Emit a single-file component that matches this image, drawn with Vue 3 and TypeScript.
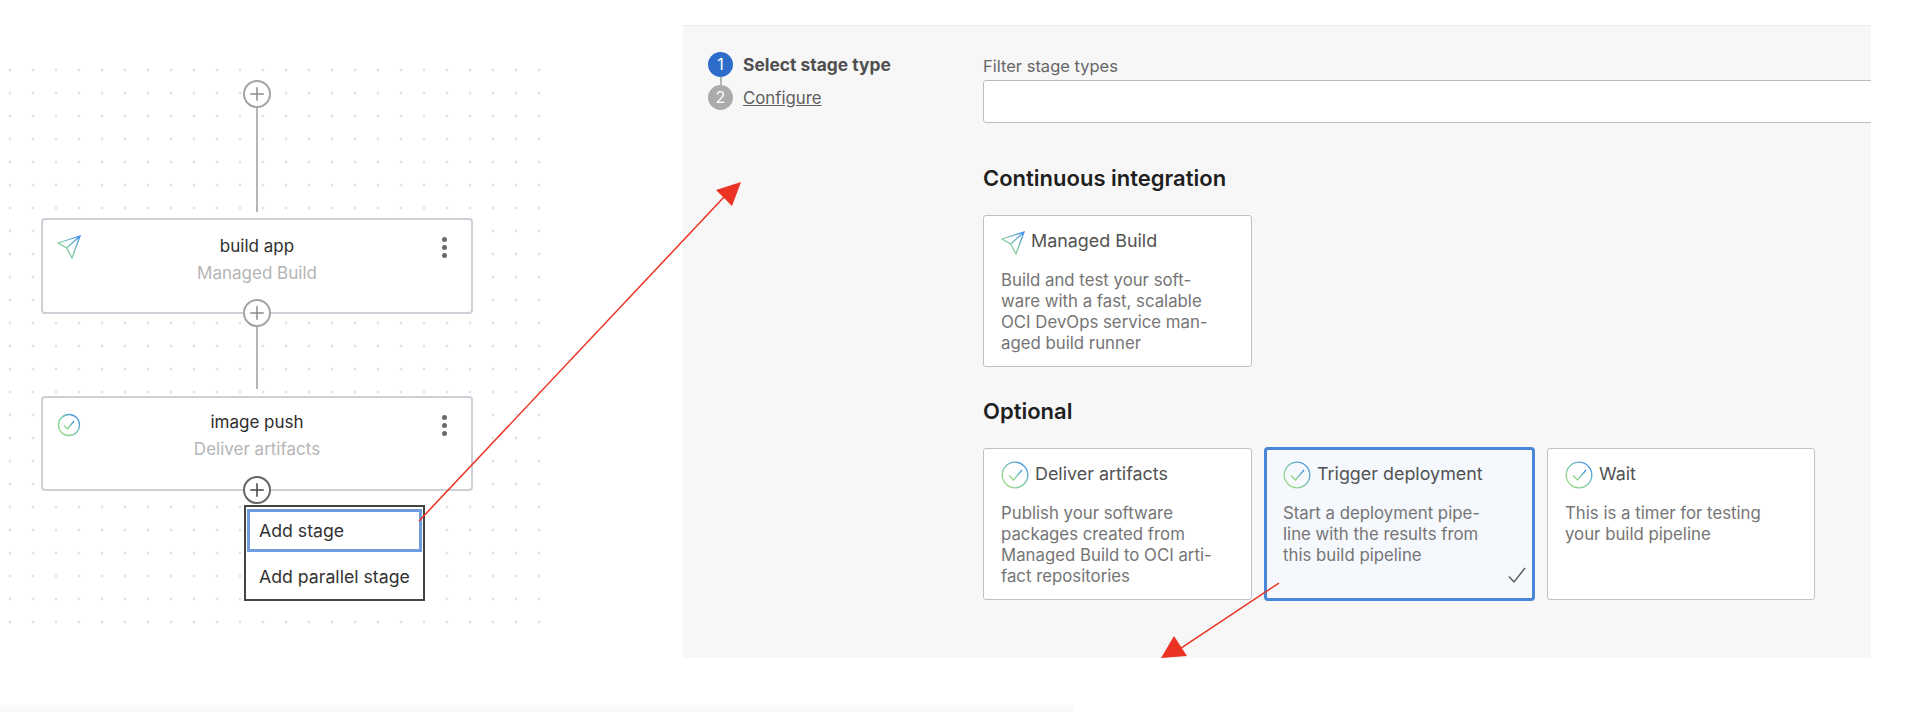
<script setup lang="ts">
type StageCard = {
  title: string
  desc: string
  icon: 'send' | 'check'
  selected?: boolean
}

const ciCards: StageCard[] = [
  {
    title: 'Managed Build',
    desc: 'Build and test your soft-\nware with a fast, scalable\nOCI DevOps service man-\naged build runner',
    icon: 'send',
  },
]

const optionalCards: StageCard[] = [
  {
    title: 'Deliver artifacts',
    desc: 'Publish your software\npackages created from\nManaged Build to OCI arti-\nfact repositories',
    icon: 'check',
  },
  {
    title: 'Trigger deployment',
    desc: 'Start a deployment pipe-\nline with the results from\nthis build pipeline',
    icon: 'check',
    selected: true,
  },
  {
    title: 'Wait',
    desc: 'This is a timer for testing\nyour build pipeline',
    icon: 'check',
  },
]
</script>

<template>
  <div class="page">
    <svg width="0" height="0" class="defs">
      <defs>
        <linearGradient id="brand" x1="1" y1="0" x2="0" y2="1">
          <stop offset="0" stop-color="#3f8ded" />
          <stop offset="0.55" stop-color="#7cc9a8" />
          <stop offset="1" stop-color="#a0e070" />
        </linearGradient>
      </defs>
    </svg>

    <div class="main">
      <div class="left">
        <div class="flow">
          <button class="plus first">
            <svg viewBox="0 0 24 24" width="24" height="24"><path d="M12 3v18M3 12h18" /></svg>
          </button>
          <div class="line tall"></div>

          <div class="node">
            <svg class="node-icon" viewBox="0 0 24 24" width="24" height="24">
              <path class="brand" d="M23 1L1 8l8.700 5L15 23zM23 1L9.700 13" />
            </svg>
            <div class="node-title">build app</div>
            <div class="node-sub">Managed Build</div>
            <div class="kebab"><i></i><i></i><i></i></div>
          </div>
          <button class="plus on-edge">
            <svg viewBox="0 0 24 24" width="24" height="24"><path d="M12 3v18M3 12h18" /></svg>
          </button>
          <div class="line short"></div>

          <div class="node second">
            <svg class="node-icon" viewBox="0 0 24 24" width="24" height="24">
              <circle class="brand" cx="12" cy="12" r="10.500" />
              <path class="brand" d="M7 12.500l3.500 3.500L17 8" />
            </svg>
            <div class="node-title">image push</div>
            <div class="node-sub">Deliver artifacts</div>
            <div class="kebab"><i></i><i></i><i></i></div>
          </div>
          <button class="plus on-edge active">
            <svg viewBox="0 0 24 24" width="24" height="24"><path d="M12 3v18M3 12h18" /></svg>
          </button>

          <div class="menu">
            <div class="menu-item focused">Add stage</div>
            <div class="menu-item">Add parallel stage</div>
          </div>
        </div>
      </div>

      <div class="panel">
        <div class="stepper">
          <div class="step">
            <span class="num current">1</span>
            <span class="step-label bold">Select stage type</span>
          </div>
          <div class="step-link"></div>
          <div class="step">
            <span class="num">2</span>
            <a class="step-label link">Configure</a>
          </div>
        </div>

        <div class="form">
          <label class="filter-label">Filter stage types</label>
          <input class="filter" type="text" />

          <h2 class="heading ci">Continuous integration</h2>
          <div class="cards">
            <div v-for="card in ciCards" :key="card.title" class="card">
              <div class="card-head">
                <svg class="send" viewBox="0 0 24 24" width="24" height="24">
                  <path class="brand" d="M23 1L1 8l8.700 5L15 23zM23 1L9.700 13" />
                </svg>
                <span class="card-title">{{ card.title }}</span>
              </div>
              <p class="card-desc">{{ card.desc }}</p>
            </div>
          </div>

          <h2 class="heading opt">Optional</h2>
          <div class="cards">
            <div
              v-for="card in optionalCards"
              :key="card.title"
              class="card"
              :class="{ selected: card.selected }"
            >
              <div class="card-head">
                <svg viewBox="0 0 28 28" width="28" height="28">
                  <circle class="brand" cx="14" cy="14" r="12.800" />
                  <path class="brand" d="M8 14.500l4.500 4.500L21 9" />
                </svg>
                <span class="card-title">{{ card.title }}</span>
              </div>
              <p class="card-desc">{{ card.desc }}</p>
              <svg v-if="card.selected" class="tick" viewBox="0 0 18 16" width="18" height="16">
                <path d="M1 9.500L6 15 17 1" />
              </svg>
            </div>
          </div>
        </div>
      </div>
    </div>

    <div class="strip"></div>

    <!-- red annotation arrows over the screenshot -->
    <svg class="arrows" width="1908" height="712" viewBox="0 0 1908 712">
      <path d="M419 521L725 196" />
      <polygon points="741,182 716,190 732,206" />
      <path d="M1279 583L1178 650" />
      <polygon points="1174,636 1187,656 1161,658" />
    </svg>
  </div>
</template>

<style scoped>
.page {
  position: relative;
  width: 1908px;
  height: 712px;
  overflow: hidden;
  background: #fff;
  font-family: Inter, 'Noto Sans', sans-serif;
  color: #333;
}
.defs {
  position: absolute;
}
.main {
  display: flex;
  align-items: flex-start;
  height: 705px;
}
.strip {
  width: 1073px;
  height: 7px;
  background: #fafafa;
}
.left {
  flex: none;
  width: 683px;
  padding-top: 59px;
}
.flow {
  display: flex;
  flex-direction: column;
  align-items: center;
  box-sizing: border-box;
  width: 552px;
  height: 575px;
  padding: 21px 79px 0 41px;
  background-image: radial-gradient(circle, #c4c4c4 0.8px, transparent 1.2px);
  background-size: 23px 23px;
  background-position: -1.5px -0.5px;
}
.plus {
  flex: none;
  box-sizing: border-box;
  width: 28px;
  height: 28px;
  padding: 0;
  display: flex;
  align-items: center;
  justify-content: center;
  position: relative;
  z-index: 1;
  background: #fff;
  border: 2px solid #a4a4a4;
  border-radius: 50%;
}
.plus svg {
  width: 18px;
  height: 18px;
  fill: none;
  stroke: #8a8a8a;
  stroke-width: 2;
}
.plus.active {
  border-color: #666;
}
.plus.active svg {
  stroke: #444;
}
.on-edge {
  margin-top: -15px;
}
.line {
  flex: none;
  width: 2px;
  background: #b5b5b8;
}
.tall {
  height: 104px;
  margin-bottom: 6px;
}
.short {
  height: 62px;
  margin-bottom: 7px;
}
.node {
  flex: none;
  position: relative;
  box-sizing: border-box;
  width: 432px;
  height: 96px;
  padding-top: 14px;
  text-align: center;
  background: #fff;
  border: 2px solid #cdd0d6;
  border-radius: 4px;
}
.node.second {
  height: 95px;
  padding-top: 12px;
}
.node-icon {
  position: absolute;
  left: 14px;
  top: 15px;
  fill: none;
}
.brand {
  fill: none;
  stroke: url(#brand);
  stroke-width: 1.300;
}
.node-title {
  font-size: 17px;
  line-height: 24px;
  color: #2e2e2e;
}
.node-sub {
  margin-top: 3px;
  font-size: 17px;
  line-height: 24px;
  color: #b5b5b5;
}
.kebab {
  position: absolute;
  right: 24px;
  top: 17px;
  display: flex;
  flex-direction: column;
  gap: 3px;
}
.kebab i {
  width: 5px;
  height: 5px;
  border-radius: 50%;
  background: #6a6a6a;
}
.menu {
  flex: none;
  align-self: flex-start;
  box-sizing: border-box;
  width: 181px;
  height: 96px;
  margin: 1px 0 0 203px;
  padding: 2px 1px 1px;
  background: #fff;
  border: 2px solid #444;
  position: relative;
  z-index: 2;
}
.menu-item {
  box-sizing: border-box;
  height: 43px;
  padding-left: 9px;
  font-size: 17.700px;
  line-height: 37px;
  color: #333;
  border: 3px solid transparent;
}
.menu-item.focused {
  border-color: #6f9bdf;
}
.menu-item + .menu-item {
  margin-top: 3px;
}
.panel {
  flex: none;
  display: flex;
  box-sizing: border-box;
  width: 1188px;
  height: 633px;
  margin-top: 25px;
  padding-top: 30px;
  overflow: hidden;
  background: #f7f7f7;
  border-top: 1px solid #ececec;
}
.stepper {
  flex: none;
  box-sizing: border-box;
  width: 300px;
  margin-top: -4px;
  padding-left: 25px;
}
.step {
  display: flex;
  align-items: center;
  gap: 10px;
  height: 25px;
}
.num {
  flex: none;
  width: 25px;
  height: 25px;
  border-radius: 50%;
  background: #ababab;
  color: #fff;
  font-size: 16px;
  line-height: 25px;
  text-align: center;
}
.num.current {
  background: #2d6cc9;
}
.step-link {
  width: 2px;
  height: 8px;
  margin-left: 12px;
  background: #b5b5b5;
}
.step-label {
  font-size: 16.800px;
  color: #5f5f5f;
}
.bold {
  font-size: 17.400px;
  font-weight: 700;
  color: #4f4f4f;
}
.link {
  text-decoration: underline;
}
.form {
  flex: none;
  width: 890px;
}
.filter-label {
  display: block;
  font-size: 16.500px;
  line-height: 20px;
  color: #666;
}
.filter {
  display: block;
  box-sizing: border-box;
  width: 100%;
  height: 43px;
  margin: 4px 0 0;
  background: #fff;
  border: 1px solid #b9bcc4;
  border-radius: 3px;
}
.heading {
  margin: 0;
  font-size: 22px;
  font-weight: 600;
  line-height: 26px;
  color: #1f1f1f;
}
.ci {
  margin-top: 42px;
  margin-bottom: 24px;
}
.opt {
  margin-top: 31px;
  margin-bottom: 24px;
}
.cards {
  display: grid;
  grid-template-columns: 269px 271px 268px;
  column-gap: 12px;
  height: 152px;
}
.card {
  position: relative;
  box-sizing: border-box;
  padding: 12px 17px 0;
  background: #fff;
  border: 1px solid #bfc1c9;
  border-radius: 3px;
}
.card.selected {
  margin: -1px 0;
  padding: 11px 16px 0;
  background: #f5f9fe;
  border: 3px solid #4a86d8;
  border-radius: 4px;
}
.card-head {
  display: flex;
  gap: 6px;
  height: 28px;
}
.card-head svg {
  flex: none;
}
.send {
  margin-top: 3px;
}
.card-title {
  font-size: 17.900px;
  line-height: 26px;
  color: #525252;
}
.card-desc {
  margin: 14px 0 0;
  font-size: 16.800px;
  line-height: 21px;
  color: #757575;
  white-space: pre-line;
}
.tick {
  position: absolute;
  right: 6px;
  bottom: 15px;
  fill: none;
  stroke: #555;
  stroke-width: 1.300;
}
.arrows {
  position: absolute;
  left: 0;
  top: 0;
  pointer-events: none;
  z-index: 5;
}
.arrows path {
  fill: none;
  stroke: #ea3323;
  stroke-width: 1.500;
}
.arrows polygon {
  fill: #ea3323;
}
</style>
